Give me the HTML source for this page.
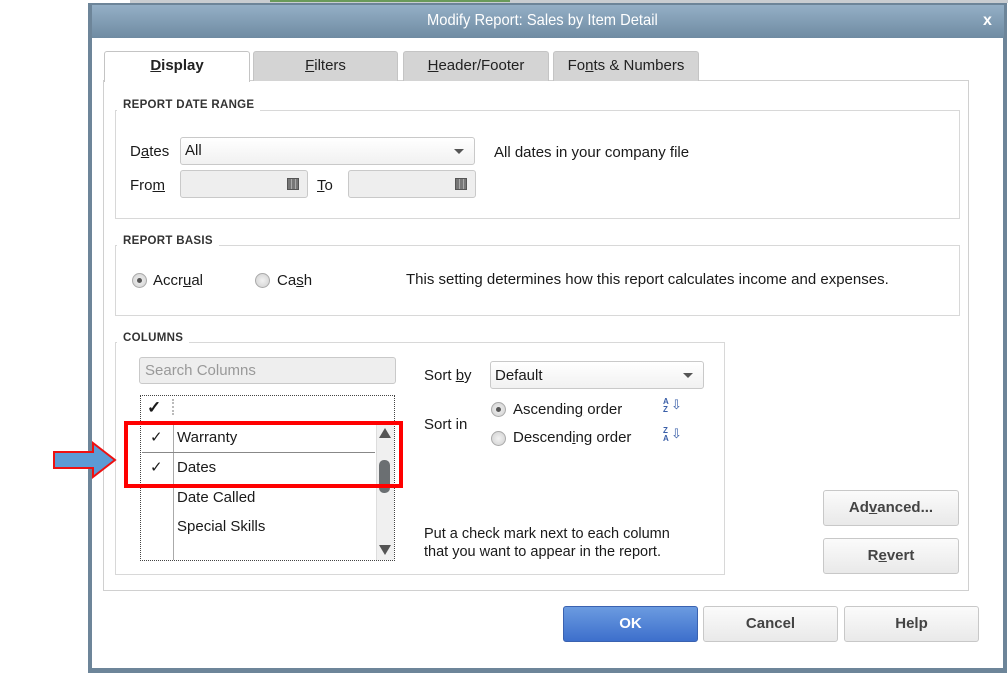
<!DOCTYPE html>
<html><head><style>
*{margin:0;padding:0;box-sizing:border-box}
body{width:1008px;height:674px;background:#fff;position:relative;overflow:hidden;font-family:"Liberation Sans",Arial,sans-serif;font-size:15px;color:#1a1a1a}
.a{position:absolute}
u{text-decoration:underline}
.grp{position:absolute;border:1px solid #d8d8d8}
.gl{position:absolute;font-size:11.5px;font-weight:bold;letter-spacing:.3px;background:#fff;padding:0 6px;color:#333}
.inp{position:absolute;border:1px solid #c9c9c9;border-radius:3px;background:linear-gradient(#fff,#f1f1f1)}
.dis{background:#eeeeee}
.dd{position:absolute;right:10px;top:11px;width:0;height:0;border-left:5px solid transparent;border-right:5px solid transparent;border-top:5px solid #555}
.cal{position:absolute;width:12px;height:12px;background:#777;border:1px solid #555;background-image:linear-gradient(90deg,transparent 3px,#aaa 3px,#aaa 4px,transparent 4px,transparent 7px,#aaa 7px,#aaa 8px,transparent 8px)}
.rad{position:absolute;width:15px;height:15px;border-radius:50%;border:1px solid #aaa;background:radial-gradient(#f2f2f2,#cfcfcf)}
.rad.on::after{content:"";position:absolute;left:4px;top:4px;width:5px;height:5px;border-radius:50%;background:#555}
.btn{position:absolute;border:1px solid #c8c8c8;border-radius:3px;background:linear-gradient(#fbfbfb,#e9e9e9);text-align:center;font-weight:bold;color:#444;font-size:15px}
.tab{position:absolute;top:51px;height:30px;border:1px solid #c4c4c4;border-bottom:none;border-radius:3px 3px 0 0;background:#d4d4d4;text-align:center;line-height:28px;font-size:15px;color:#222}
</style></head><body>
<div class="a" style="left:130px;top:0;width:878px;height:3px;background:#c9cdd1"></div>
<div class="a" style="left:270px;top:0;width:240px;height:2px;background:#6a9a5a"></div>
<div class="a" style="left:88px;top:3px;width:919px;height:670px;background:#6d8599"></div>
<div class="a" style="left:92px;top:5px;width:912px;height:33px;background:linear-gradient(#94afc6,#6f8ba2)"></div>
<div class="a" style="left:92px;top:12px;width:900px;text-align:center;color:#fff;font-size:16px"><span style="display:inline-block;transform:scaleX(.92)">Modify Report: Sales by Item Detail</span></div>
<div class="a" style="left:983px;top:12px;color:#fff;font-size:16px;font-weight:bold">x</div>
<div class="a" style="left:92px;top:38px;width:911px;height:630px;background:#fff"></div>
<div class="a" style="left:103px;top:80px;width:866px;height:511px;border:1px solid #d0d0d0"></div>
<div class="tab" style="left:253px;width:145px"><u>F</u>ilters</div>
<div class="tab" style="left:403px;width:146px"><u>H</u>eader/Footer</div>
<div class="tab" style="left:553px;width:146px">Fo<u>n</u>ts &amp; Numbers</div>
<div class="tab" style="left:104px;width:146px;height:31px;background:#fff;font-weight:bold"><u>D</u>isplay</div>

<div class="grp" style="left:115px;top:110px;width:845px;height:109px"></div>
<div class="gl" style="left:117px;top:99px">REPORT DATE RANGE</div>
<div class="a" style="left:130px;top:143px">D<u>a</u>tes</div>
<div class="inp" style="left:180px;top:137px;width:295px;height:28px"><span class="a" style="left:4px;top:4px">All</span><div class="dd"></div></div>
<div class="a" style="left:494px;top:144px;font-size:15px">All dates in your company file</div>
<div class="a" style="left:130px;top:177px">Fro<u>m</u></div>
<div class="inp dis" style="left:180px;top:170px;width:128px;height:28px"><div class="cal" style="left:106px;top:7px"></div></div>
<div class="a" style="left:317px;top:177px"><u>T</u>o</div>
<div class="inp dis" style="left:348px;top:170px;width:128px;height:28px"><div class="cal" style="left:106px;top:7px"></div></div>

<div class="grp" style="left:115px;top:245px;width:845px;height:71px"></div>
<div class="gl" style="left:117px;top:235px">REPORT BASIS</div>
<div class="rad on" style="left:132px;top:273px"></div>
<div class="a" style="left:153px;top:272px">Accr<u>u</u>al</div>
<div class="rad" style="left:255px;top:273px"></div>
<div class="a" style="left:277px;top:272px">Ca<u>s</u>h</div>
<div class="a" style="left:406px;top:271px;font-size:15px">This setting determines how this report calculates income and expenses.</div>

<div class="grp" style="left:115px;top:342px;width:610px;height:233px"></div>
<div class="gl" style="left:117px;top:332px">COLUMNS</div>
<div class="inp dis" style="left:139px;top:357px;width:257px;height:27px;border-radius:3px"><span class="a" style="left:5px;top:4px;color:#999">Search Columns</span></div>
<div class="a" style="left:140px;top:395px;width:255px;height:166px;border:1px dotted #444"></div>
<div class="a" style="left:173px;top:425px;width:1px;height:135px;background:#aaa"></div>
<div class="a" style="left:142px;top:452px;width:233px;height:1px;background:#888"></div>
<div class="a" style="left:142px;top:424px;width:233px;height:1px;background:#ccc"></div>
<div class="a" style="left:147px;top:398px;font-size:17px;font-weight:bold">✓</div>
<div class="a" style="left:172px;top:399px;width:2px;height:16px;border-left:2px dotted #bbb"></div>
<div class="a" style="left:150px;top:428px;font-size:15px">✓</div>
<div class="a" style="left:177px;top:429px">Warranty</div>
<div class="a" style="left:150px;top:458px;font-size:15px">✓</div>
<div class="a" style="left:177px;top:459px">Dates</div>
<div class="a" style="left:177px;top:489px">Date Called</div>
<div class="a" style="left:177px;top:518px">Special Skills</div>
<div class="a" style="left:376px;top:425px;width:18px;height:135px;background:#f0f0f0;border-left:1px solid #ddd"></div>
<div class="a" style="left:379px;top:428px;border-left:6px solid transparent;border-right:6px solid transparent;border-bottom:10px solid #555"></div>
<div class="a" style="left:379px;top:545px;border-left:6px solid transparent;border-right:6px solid transparent;border-top:10px solid #555"></div>
<div class="a" style="left:379px;top:460px;width:11px;height:33px;border-radius:5px;background:#6b6f72"></div>
<div class="a" style="left:124px;top:421px;width:279px;height:67px;border:4px solid #f00"></div>
<svg class="a" style="left:52px;top:440px" width="66" height="40"><path d="M2 12H41V3L63 20L41 37V28H2Z" fill="#5b9bd5" stroke="#e11" stroke-width="2"/></svg>

<div class="a" style="left:424px;top:367px">Sort <u>b</u>y</div>
<div class="inp" style="left:490px;top:361px;width:214px;height:28px"><span class="a" style="left:4px;top:5px">Default</span><div class="dd"></div></div>
<div class="a" style="left:424px;top:416px">Sort in</div>
<div class="rad on" style="left:491px;top:402px"></div>
<div class="a" style="left:513px;top:401px">Ascendin<u>g</u> order</div>
<div class="rad" style="left:491px;top:431px"></div>
<div class="a" style="left:513px;top:429px">Descend<u>i</u>ng order</div>
<div class="a" style="left:663px;top:398px;font-size:8px;line-height:8px;color:#3a5fa8;font-weight:bold">A<br>Z</div>
<div class="a" style="left:671px;top:397px;color:#3a5fa8;font-size:13px">⇩</div>
<div class="a" style="left:663px;top:427px;font-size:8px;line-height:8px;color:#3a5fa8;font-weight:bold">Z<br>A</div>
<div class="a" style="left:671px;top:426px;color:#3a5fa8;font-size:13px">⇩</div>
<div class="a" style="left:424px;top:525px;font-size:14.5px;line-height:18px">Put a check mark next to each column<br>that you want to appear in the report.</div>

<div class="btn" style="left:823px;top:490px;width:136px;height:36px;line-height:34px">Ad<u>v</u>anced...</div>
<div class="btn" style="left:823px;top:538px;width:136px;height:36px;line-height:34px">R<u>e</u>vert</div>

<div class="btn" style="left:563px;top:606px;width:135px;height:36px;line-height:34px;background:linear-gradient(#6b9be0,#3d6fcc);border-color:#3a62b0;color:#fff">OK</div>
<div class="btn" style="left:703px;top:606px;width:135px;height:36px;line-height:34px">Cancel</div>
<div class="btn" style="left:844px;top:606px;width:135px;height:36px;line-height:34px">Help</div>
</body></html>
